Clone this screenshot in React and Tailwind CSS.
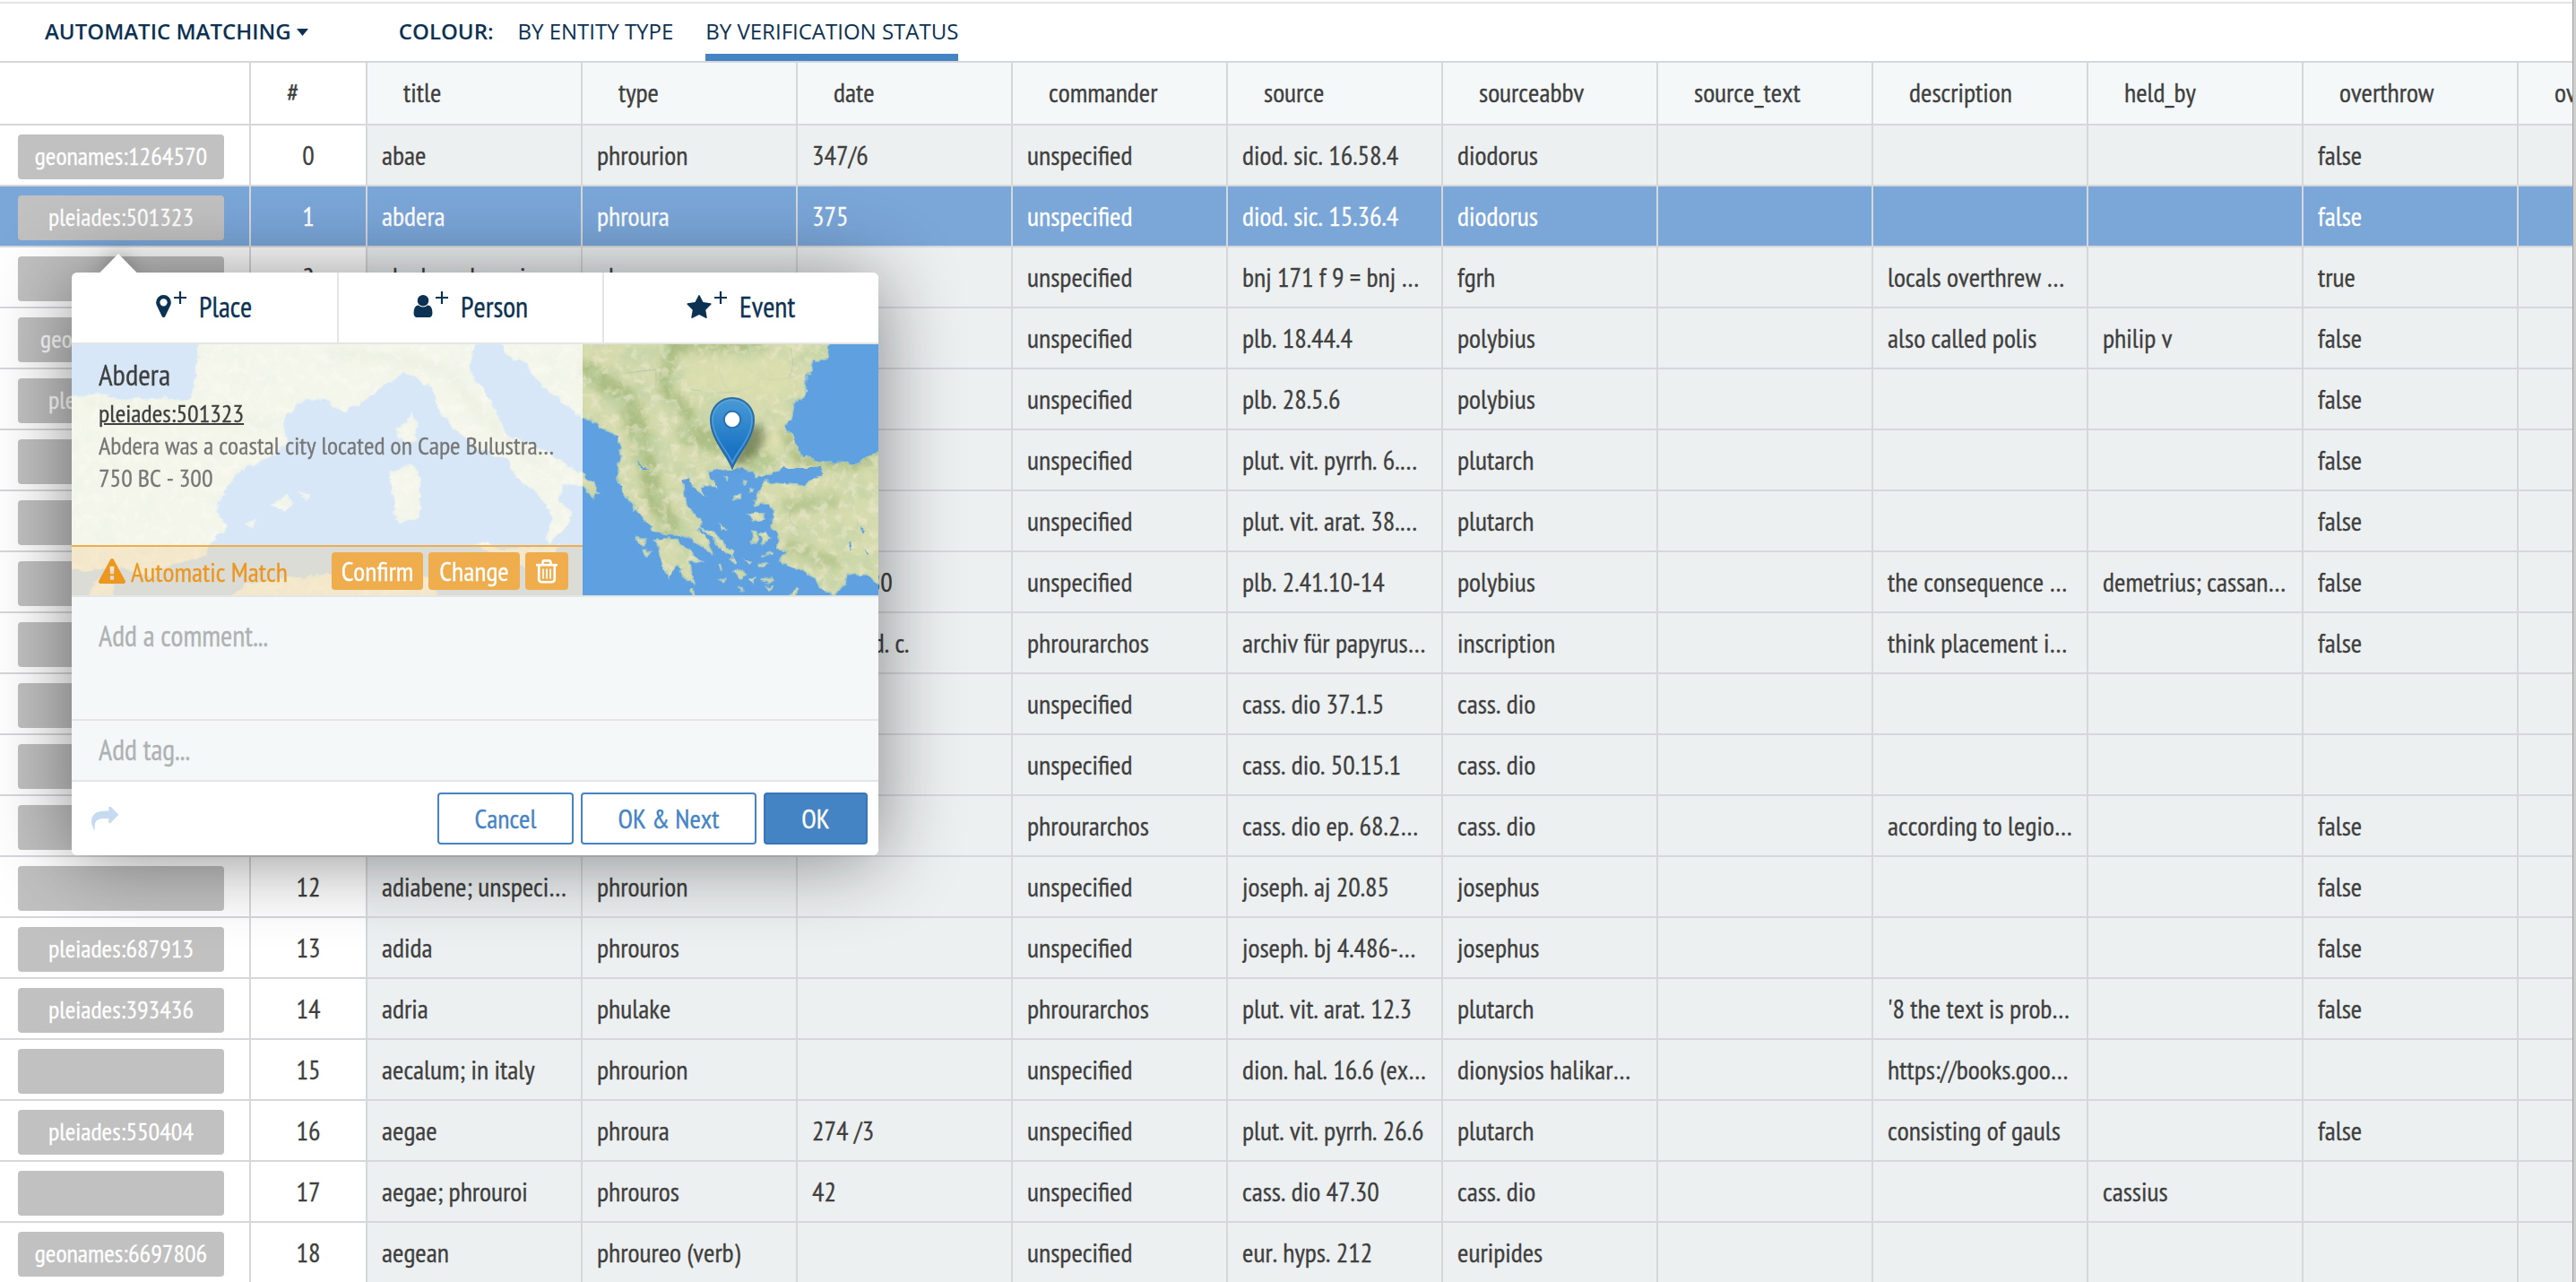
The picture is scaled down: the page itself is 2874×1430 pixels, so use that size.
import React from "react";

const HEADERS = ["title", "type", "date", "commander", "source", "sourceabbv", "source_text", "description", "held_by", "overthrow", "overthrow_by"];

const ROWS = [
  ["geonames:1264570", "abae", "phrourion", "347/6", "unspecified", "diod. sic. 16.58.4", "diodorus", "", "", "", "false"],
  ["pleiades:501323", "abdera", "phroura", "375", "unspecified", "diod. sic. 15.36.4", "diodorus", "", "", "", "false"],
  ["", "abydos; phrouri…", "phroura", "", "unspecified", "bnj 171 f 9 = bnj …", "fgrh", "", "locals overthrew …", "", "true"],
  ["geonames:734077", "", "", "", "unspecified", "plb. 18.44.4", "polybius", "", "also called polis", "philip v", "false"],
  ["pleiades:501325", "", "", "", "unspecified", "plb. 28.5.6", "polybius", "", "", "", "false"],
  ["", "", "", "", "unspecified", "plut. vit. pyrrh. 6.…", "plutarch", "", "", "", "false"],
  ["", "", "", "", "unspecified", "plut. vit. arat. 38.…", "plutarch", "", "", "", "false"],
  ["", "", "", "315-280", "unspecified", "plb. 2.41.10-14", "polybius", "", "the consequence …", "demetrius; cassan…", "false"],
  ["", "", "", "late 3rd. c.", "phrourarchos", "archiv für papyrus…", "inscription", "", "think placement i…", "", "false"],
  ["", "", "", "", "unspecified", "cass. dio 37.1.5", "cass. dio", "", "", "", ""],
  ["", "", "", "", "unspecified", "cass. dio. 50.15.1", "cass. dio", "", "", "", ""],
  ["", "", "", "", "phrourarchos", "cass. dio ep. 68.2…", "cass. dio", "", "according to legio…", "", "false"],
  ["", "adiabene; unspeci…", "phrourion", "", "unspecified", "joseph. aj 20.85", "josephus", "", "", "", "false"],
  ["pleiades:687913", "adida", "phrouros", "", "unspecified", "joseph. bj 4.486-…", "josephus", "", "", "", "false"],
  ["pleiades:393436", "adria", "phulake", "", "phrourarchos", "plut. vit. arat. 12.3", "plutarch", "", "'8 the text is prob…", "", "false"],
  ["", "aecalum; in italy", "phrourion", "", "unspecified", "dion. hal. 16.6 (ex…", "dionysios halikar…", "", "https://books.goo…", "", ""],
  ["pleiades:550404", "aegae", "phroura", "274 /3", "unspecified", "plut. vit. pyrrh. 26.6", "plutarch", "", "consisting of gauls", "", "false"],
  ["", "aegae; phrouroi", "phrouros", "42", "unspecified", "cass. dio 47.30", "cass. dio", "", "", "cassius", ""],
  ["geonames:6697806", "aegean", "phroureo (verb)", "", "unspecified", "eur. hyps. 212", "euripides", "", "", "", ""],
];

function Toolbar() {
  return (
    <div className="mt-[2px] flex h-[68px] shrink-0 items-stretch border-y-2 border-t-[#e5e5e5] border-b-[#d5d7da] bg-white font-['Open_Sans',sans-serif] text-[24px] leading-[64px] text-[#0b3153] [font-kerning:normal] [-webkit-text-stroke:0]">
      <div className="ml-[50px] flex items-center font-semibold">
        <span className="relative -top-[1px]">AUTOMATIC MATCHING</span>
        <svg className="ml-[6px]" width="13" height="8" viewBox="0 0 13 8"><path d="M0 0h13L6.500 8z" fill="#0b3153" /></svg>
      </div>
      <div className="ml-[101px] font-semibold"><span className="relative -top-[1px]">COLOUR:</span></div>
      <div className="ml-[27px]"><span className="relative -top-[1px]">BY ENTITY TYPE</span></div>
      <div className="relative ml-[36px]">
        <span className="relative -top-[1px]">BY VERIFICATION STATUS</span>
        <div className="absolute inset-x-0 bottom-0 h-2 bg-[#4483c4]" />
      </div>
    </div>
  );
}

function HeaderRow() {
  return (
    <div className="flex h-[70px] shrink-0 border-b-2 border-[#d5d7da] leading-[66px]">
      <div className="w-[280px] shrink-0 border-r-2 border-[#d5d7da] bg-white" />
      <div className="w-[130px] shrink-0 border-r-2 border-[#d5d7da] bg-white pl-10">#</div>
      {HEADERS.map((h) => (
        <div key={h} className="w-[240px] shrink-0 border-r-2 border-[#d5d7da] bg-[#f4f8f9] pl-10">{h}</div>
      ))}
    </div>
  );
}

function Row({ row, index }) {
  const selected = index === 1;
  const cell = selected ? "bg-[#7aa6d8]" : "bg-[#edf0f1]";
  const lead = selected ? "bg-[#7aa6d8]" : "bg-white";
  return (
    <div className={`flex h-[68px] shrink-0 border-b-2 border-[#d5d7da] leading-[66px] ${selected ? "text-white" : ""}`}>
      <div className={`w-[280px] shrink-0 border-r-2 border-[#d5d7da] pl-5 pt-[10px] ${lead}`}>
        <div className="h-[50px] w-[230px] rounded-[4px] bg-[#c1c1c1] text-center text-[28px] leading-[47px] text-white">{row[0]}</div>
      </div>
      <div className={`w-[130px] shrink-0 border-r-2 border-[#d5d7da] text-center ${lead}`}>{index}</div>
      {HEADERS.map((h, i) => (
        <div key={h} className={`w-[240px] shrink-0 overflow-hidden border-r-2 border-[#d5d7da] pl-4 ${cell}`}>{row[i + 1]}</div>
      ))}
    </div>
  );
}

const LAND = [
  // Iberia, France, Italy
  "M0 58L37 56 67 63 104 61 133 63 139 29 142 -5H456L446 9 444 29 462 56 481 89 485 102 529 119 555 136 570 145 583 156 588 166 583 172 570 159 548 156 544 176 557 186 555 199 533 223 529 216 536 199 533 183 518 166 496 149 488 129 455 116 429 96 411 76 400 46 370 31 344 49 326 64 307 74 285 64 259 61 237 83 240 109 222 126 189 139 170 163 161 186 172 204 154 223 148 236 122 243 100 250 89 260 55 249 18 253 -5 249V58z",
  // Balkans
  "M477 -5L482 8 492 19 498 14 507 20 514 33 536 56 570 81 587 89 605 101 613 113 610 133 610 153 618 168 628 183 640 196 648 206 664 212 684 214 693 219 707 228 715 234 711 221 700 208 703 199 693 189 683 173 682 153 688 146 693 159 707 168 702 157 720 159 712 149 710 141 737 139 760 141 764 149 777 146 793 138 835 138 842 133 817 126 807 114 805 104 793 92 802 83 805 66 818 61 820 36 827 18 843 18 846 -5z",
  // Anatolia
  "M905 117L880 133 845 132 833 138 839 144 827 149 817 157 798 156 773 154 766 166 763 179 778 179 784 192 780 200 788 212 788 226 798 232 790 243 807 249 827 259 840 276 853 277 863 269 865 256 887 258 905 270z",
  // Peloponnese
  "M650 219L667 216 683 223 693 233 702 243 688 241 693 267 680 256 675 246 668 260 660 249 657 236z",
  // Sicily, Sardinia, Corsica, North Africa
  "M451 224L462 220 478 229 520 227 544 223 535 239 530 254 515 252 490 242 472 236z",
  "M355 143L377 134 390 149 387 193 375 194 366 200 359 190 359 176z",
  "M364 93L375 88 381 76 384 84 383 106 374 113 366 104z",
  "M172 285L192 269 225 262 274 258 322 256 370 261 400 259 408 285z",
  "M18 285L28 259 46 270 48 285z",
  // Islands
  "M222 179L240 170 246 178 238 188 228 182z", "M254 165L265 168 263 173z", "M196 200L204 196 200 204z",
  "M702 204L717 209 720 217 735 229 738 237 725 228 712 214z",
  "M755 190L772 187 772 195 762 197z", "M758 208l6 1 0 12-5 2z", "M766 212l8-3 4 9-8 3z", "M738 168l8 0-2 5-6 0z", "M723 201l8 4-5 2z",
  "M632 216l8 0-2 8-5-1z", "M637 228l8 4-4 4z", "M625 175l6 7-5 2z", "M738 255l8-4 5 4-6 5z", "M722 262l8-1-4 4z", "M752 240l6 2-2 3z",
  "M800 279l8-8 2 3-6 9z", "M766 245l9-2 2 2-9 3z", "M768 264l16-2-6 4z", "M728 147l4 1-1 3z", "M748 152l5 1-2 3z", "M755 161l5 0-4 3z", "M745 272l3 2-2 2z", "M690 276l3-3 2 8z",
  "M735 240l5 6 2-1-4-6z", "M722 246l2 6 2 0-1-6z", "M756 260l5 0-2 4z", "M776 270l5 1-3 3z", "M770 234l12-3 0 2z",
];

function MapDrawing() {
  return (
    <svg className="absolute inset-0" width="900" height="280" viewBox="0 0 900 280">
      <defs>
        <filter id="coast" x="0" y="0" width="900" height="280" filterUnits="userSpaceOnUse">
          <feTurbulence type="fractalNoise" baseFrequency="0.09" numOctaves="3" seed="4" />
          <feDisplacementMap in="SourceGraphic" scale="9" xChannelSelector="R" yChannelSelector="G" />
          <feGaussianBlur stdDeviation="0.7" />
        </filter>
        <filter id="hills" x="0" y="0" width="900" height="280" filterUnits="userSpaceOnUse">
          <feTurbulence type="fractalNoise" baseFrequency="0.04" numOctaves="5" seed="11" />
          <feColorMatrix values="0 0 0 0 0.54  0 0 0 0 0.65  0 0 0 0 0.38  3.5 0 0 0 -1.5" />
          <feComposite in2="SourceGraphic" operator="in" />
        </filter>
        <filter id="ridges" x="0" y="0" width="900" height="280" filterUnits="userSpaceOnUse">
          <feTurbulence type="fractalNoise" baseFrequency="0.09" numOctaves="3" seed="23" />
          <feColorMatrix values="0 0 0 0 0.92  0 0 0 0 0.85  0 0 0 0 0.68  0 4 0 0 -2" />
          <feComposite in2="SourceGraphic" operator="in" />
        </filter>
        <filter id="soft" x="-50%" y="-50%" width="200%" height="200%"><feGaussianBlur stdDeviation="5" /></filter>
        <clipPath id="landclip">{LAND.map((d, i) => <path key={i} d={d} />)}</clipPath>
        <linearGradient id="pin" x1="0" y1="0" x2="0" y2="1">
          <stop offset="0" stopColor="#4a9bd4" />
          <stop offset="0.75" stopColor="#1a74c4" />
        </linearGradient>
      </defs>
      <rect width="900" height="280" fill="#5fa1e0" />
      <g filter="url(#coast)">
        <g fill="#d6dbae" stroke="#a8c9c4" strokeWidth="1.5">{LAND.map((d, i) => <path key={i} d={d} />)}</g>
        <g clipPath="url(#landclip)">
          <g filter="url(#soft)" fill="none" stroke="#93ad6a" strokeLinecap="round">
            <path d="M575 30L620 60 640 120 650 170 670 205" strokeWidth="22" opacity="0.65" />
            <path d="M670 -5L662 50 690 80" strokeWidth="14" opacity="0.7" />
            <path d="M670 2H770" strokeWidth="10" opacity="0.8" />
            <path d="M690 100L740 112 770 130" strokeWidth="26" opacity="0.6" />
            <path d="M795 100L812 130 870 135 900 125" strokeWidth="9" opacity="0.7" />
            <path d="M800 180L850 175 M800 225L850 245" strokeWidth="16" opacity="0.45" />
            <path d="M290 10L360 15 420 30 460 80 520 130" strokeWidth="14" opacity="0.45" />
            <path d="M20 65L140 80 220 90" strokeWidth="14" opacity="0.35" />
          </g>
        </g>
      </g>
      <g fill="none" stroke="#a9bfae" strokeWidth="1" opacity="0.8">
        <path d="M690 50q25 6 50 3 22-4 28-14 20 2 40-3M722 26q2 18 14 28M745 18q15 20 45 22M802 5q6 20-2 32M620 32l32-4 0 18M770 86l4 30M805 180q-10 20 5 25" />
      </g>
      <g filter="url(#coast)">
        <g filter="url(#hills)" opacity="0.7">{LAND.map((d, i) => <path key={i} d={d} />)}</g>
      </g>
      <g filter="url(#coast)">
        <g filter="url(#ridges)" opacity="0.45">{LAND.map((d, i) => <path key={i} d={d} />)}</g>
      </g>
      <g filter="url(#soft)" fill="#dde0ae" opacity="0.7">
        <path d="M685 20L800 15 800 60 740 55 690 50zM765 100h28v22h-20z" />
      </g>
      <g filter="url(#coast)" fill="#5fa1e0">
        <path d="M793 138H833L838 144 827 149 817 156 803 153 796 148 784 154 780 150z" />
        <path d="M630 130l5 4 8 4-6 2zM868 220l3 0 2 10-3-3zM882 205l4 2-2 5zM883 226l6 8-2 2zM605 100l5 4-3 3z" />
      </g>
      <path d="M738 138L752 92Q768 84 774 100 772 122 738 138z" fill="#3d4a20" opacity="0.5" filter="url(#soft)" />
      <path d="M737 138C731 122 713 106 713 84A24 24 0 0 1 761 84C761 106 743 122 737 138z" fill="url(#pin)" stroke="#2a6ca5" strokeWidth="2" />
      <path d="M737 132C731 118 715 104 715 84A22 22 0 0 1 759 84C759 104 743 118 737 132z" fill="none" stroke="#62a8dc" strokeWidth="1.5" opacity="0.7" />
      <circle cx="737" cy="84" r="9.2" fill="#fff" stroke="#2671b3" strokeWidth="2" />
    </svg>
  );
}

const PIN = "M768 640q0-106-75-181t-181-75-181 75-75 181 75 181 181 75 181-75 75-181zm256 0q0 109-33 179l-364 774q-16 33-47.5 52t-67.5 19-67.5-19-46.5-52l-365-774q-33-70-33-179 0-212 150-362t362-150 362 150 150 362z";
const USER = "M1536 1399q0 109-62.5 187t-150.5 78h-854q-88 0-150.5-78t-62.5-187q0-85 8.5-160.5t31.5-152 58.5-131 94-89 134.5-34.5q131 128 313 128t313-128q76 0 134.5 34.5t94 89 58.5 131 31.5 152 8.5 160.5zm-256-887q0 159-112.5 271.5t-271.5 112.5-271.5-112.5-112.5-271.5 112.5-271.5 271.5-112.5 271.5 112.5 112.5 271.5z";
const STAR = "M1728 647q0 22-26 48l-363 354 86 500q1 7 1 20 0 21-10.5 35.5t-30.5 14.5q-19 0-40-12l-449-236-449 236q-22 12-40 12-21 0-31.5-14.5t-10.5-35.5q0-6 2-20l86-500-364-354q-25-27-25-48 0-37 56-46l502-73 225-455q19-41 49-41t49 41l225 455 502 73q56 9 56 46z";
const WARN = "M1024 1375v-190q0-14-9.5-23.5t-22.5-9.5h-192q-13 0-22.5 9.5t-9.5 23.5v190q0 14 9.5 23.5t22.5 9.5h192q13 0 22.5-9.5t9.5-23.5zm-2-374l18-459q0-12-10-19-13-11-24-11h-220q-11 0-24 11-10 7-10 21l17 457q0 10 10 16.5t24 6.5h185q14 0 23.5-6.5t10.5-16.5zm-14-934l768 1408q35 63-2 126-17 29-46.5 46t-63.5 17h-1536q-34 0-63.5-17t-46.5-46q-37-63-2-126l768-1408q17-31 47-49t65-18 65 18 47 49z";
const SHARE = "M1792 640q0 26-19 45l-512 512q-19 19-45 19t-45-19-19-45v-256h-224q-98 0-175.5 6t-154 21.5-133 42.5-105.5 69.5-80 101-48.5 138.5-17.5 181q0 55 5 123 0 6 2.5 23.5t2.5 26.5q0 15-8.5 25t-23.5 10q-16 0-28-17-7-9-13-22t-13.5-30-10.5-24q-127-285-127-451 0-199 53-333 162-403 875-403h224v-256q0-26 19-45t45-19 45 19l512 512q19 19 19 45z";

function Tab({ icon, box, w, h, label, className }) {
  return (
    <div className={`flex items-start text-[32px] leading-[40px] text-[#0b3153] ${className}`}>
      <svg className="mt-[25px] shrink-0" width={w} height={h} viewBox={box}><path d={icon} fill="#0b3153" /></svg>
      <svg className="ml-[3px] mt-[21px] shrink-0" width="14" height="14" viewBox="0 0 14 14"><path d="M7 0v14M0 7h14" stroke="#0b3153" strokeWidth="2.2" /></svg>
      <span className="ml-[14px] mt-[18px]">{label}</span>
    </div>
  );
}

function Popup() {
  return (
    <div className="absolute left-[80px] top-[304px] w-[900px]">
      <svg className="absolute -top-[22px] left-[30px] overflow-visible drop-shadow-[0_0_10px_rgba(0,0,0,0.35)]" width="44" height="24" viewBox="0 0 44 24"><path d="M22 1L44 23.500H0z" fill="#fff" /></svg>
      <div className="relative flex h-[650px] flex-col overflow-hidden rounded-[6px] bg-white">
        <div className="flex h-[80px] shrink-0 border-b-2 border-[#e5e5e5]">
          <Tab icon={PIN} box="0 128 1024 1536" w={17} h={25} label="Place" className="w-[298px] border-r-2 border-[#e5e5e5] pl-[94px]" />
          <Tab icon={USER} box="256 128 1280 1536" w={22} h={25} label="Person" className="w-[296px] border-r-2 border-[#e5e5e5] pl-[83px]" />
          <Tab icon={STAR} box="64 32 1664 1588" w={28} h={26} label="Event" className="w-[306px] pl-[92px]" />
        </div>
        <div className="relative h-[280px] shrink-0">
          <MapDrawing />
          <div className="relative flex h-[280px] w-[570px] flex-col bg-white/75">
            <div className="flex h-[224px] flex-col pl-[30px] pt-[12px] text-[28px] leading-[36px] text-[#777]">
              <span className="text-[33px] leading-[44px] text-[#3f3f3f]">Abdera</span>
              <span className="mt-[3px] text-[#3f3f3f] underline decoration-2">pleiades:501323</span>
              <span>Abdera was a coastal city located on Cape Bulustra…</span>
              <span>750 BC - 300</span>
            </div>
            <div className="flex h-[56px] items-center border-t-2 border-[#f0ad4e] bg-[#f0ad4e]/20 pl-[30px] pr-4 text-[30px] text-[#ec971f]">
              <svg width="30" height="28" viewBox="0 0 1792 1664"><path d={WARN} fill="#ec971f" /></svg>
              <span className="ml-[6px] mr-auto pt-[2px] leading-[52px]">Automatic Match</span>
              <div className="flex gap-[6px] leading-[41px] text-white">
                <div className="h-[42px] w-[102px] rounded-[4px] bg-[#f0ad4e] text-center">Confirm</div>
                <div className="h-[42px] w-[102px] rounded-[4px] bg-[#f0ad4e] text-center">Change</div>
                <div className="flex h-[42px] w-[48px] items-center justify-center rounded-[4px] bg-[#f0ad4e]">
                  <svg width="24" height="27" viewBox="0 0 24 27" fill="none" stroke="#fff">
                    <path d="M0 6.200h24" strokeWidth="2.600" />
                    <path d="M7.500 5.500V3.200a1.800 1.800 0 0 1 1.800-1.800h5.400a1.800 1.800 0 0 1 1.800 1.800v2.300" strokeWidth="2.600" />
                    <path d="M3.200 6.500v15.700a3 3 0 0 0 3 3h11.600a3 3 0 0 0 3-3V6.500" strokeWidth="2.600" />
                    <path d="M8 10.500v11M12 10.500v11M16 10.500v11" strokeWidth="1.800" />
                  </svg>
                </div>
              </div>
            </div>
          </div>
        </div>
        <div className="h-[140px] shrink-0 border-y-2 border-[#e5e5e5] bg-[#f4f8f9] pl-[30px] pt-[23px] text-[32px] leading-[40px] text-[#afb2b3]">Add a comment...</div>
        <div className="h-[68px] shrink-0 border-b-2 border-[#e5e5e5] bg-[#f4f8f9] pl-[30px] text-[32px] leading-[64px] text-[#afb2b3]">Add tag...</div>
        <div className="flex flex-1 items-center gap-2 pl-[22px] pr-3 text-[30px] leading-[54px] text-[#4483c4]">
          <svg className="mr-auto" width="30" height="26" viewBox="0 128 1792 1536"><path d={SHARE} fill="#c6daf0" /></svg>
          <div className="h-[58px] w-[152px] rounded-[4px] border-2 border-[#4483c4] text-center">Cancel</div>
          <div className="h-[58px] w-[196px] rounded-[4px] border-2 border-[#4483c4] text-center">OK &amp; Next</div>
          <div className="h-[58px] w-[116px] rounded-[4px] border-2 border-[#3876b8] bg-[#4483c4] text-center text-white">OK</div>
        </div>
      </div>
    </div>
  );
}

export default function App() {
  return (
    <div className="relative flex h-[1430px] w-[2874px] overflow-hidden bg-white font-['PT_Sans_Narrow','Open_Sans',sans-serif] text-[30px] text-[#3f3f3f] [font-kerning:none] [font-stretch:75%] [-webkit-text-stroke:0.3px]">
      <div className="flex w-[2870px] shrink-0 flex-col overflow-hidden whitespace-nowrap [&>div:first-child]:[font-stretch:100%]">
        <Toolbar />
        <HeaderRow />
        {ROWS.map((r, i) => <Row key={i} row={r} index={i} />)}
      </div>
      <div className="w-1 shrink-0 border-l border-[#a0a0a0] bg-[#d0d0d0]" />
      <div className="absolute left-[80px] top-[304px] h-[650px] w-[900px] rounded-[6px] shadow-[0_4px_90px_rgba(0,0,0,0.45)]" />
      <Popup />
    </div>
  );
}
